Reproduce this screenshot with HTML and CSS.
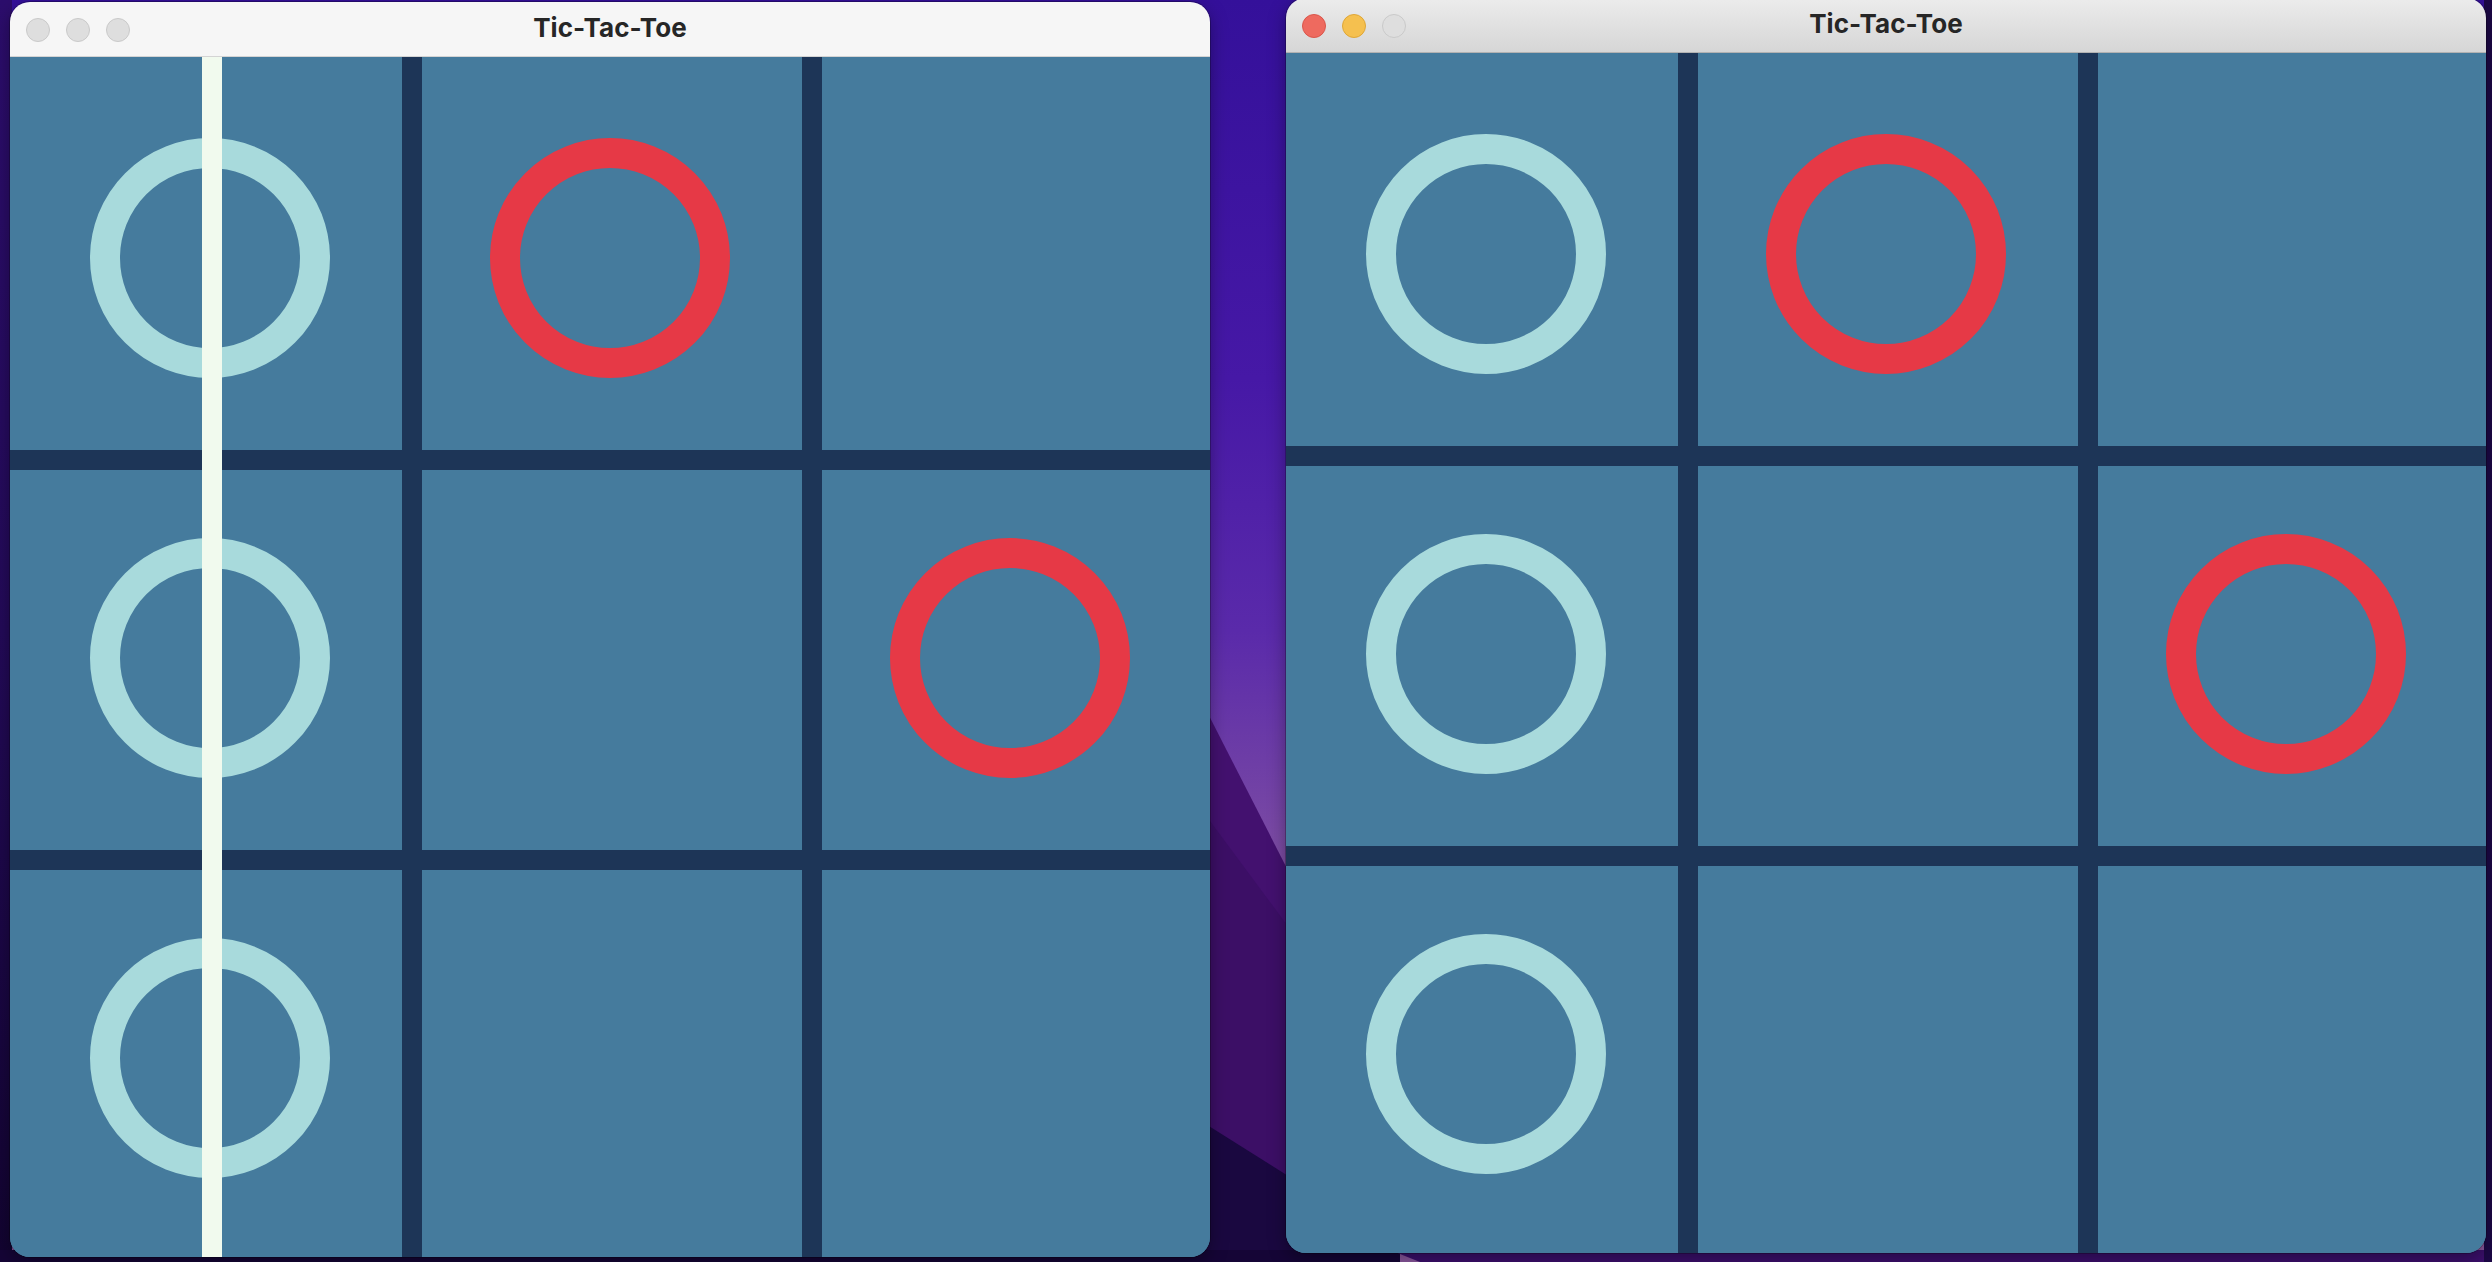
FILE: index.html
```
<!DOCTYPE html>
<html lang="en">
<head>
<meta charset="utf-8">
<title>Tic-Tac-Toe</title>
<link rel="stylesheet" href="styles.css">
</head>
<body>
<div class="desktop">
  <svg class="wallpaper" width="2492" height="1262" viewBox="0 0 2492 1262" aria-hidden="true">
    <defs>
      <linearGradient id="sky" x1="0" y1="0" x2="0" y2="1">
        <stop offset="0" stop-color="#34109a"/>
        <stop offset="0.3" stop-color="#4618a6"/>
        <stop offset="0.5" stop-color="#5a2aaa"/>
        <stop offset="0.68" stop-color="#7c4ca3"/>
        <stop offset="0.8" stop-color="#8a589e"/>
      </linearGradient>
      <linearGradient id="edge" x1="0" y1="0" x2="0" y2="1">
        <stop offset="0" stop-color="#2c0d6c"/>
        <stop offset="0.5" stop-color="#230a58"/>
        <stop offset="1" stop-color="#120430"/>
      </linearGradient>
    </defs>
    <rect width="2492" height="1262" fill="url(#sky)"/>
    <polygon points="1150,600 1350,992 1350,1262 1150,1262" fill="#43116f"/>
    <polygon points="1150,740 1350,1010 1350,1262 1150,1262" fill="#3c0f66"/>
    <polygon points="1150,1089 1350,1215 1350,1262 1150,1262" fill="#1a0840"/>
    <rect x="0" y="0" width="12" height="1262" fill="url(#edge)"/>
    <rect x="0" y="1250" width="1400" height="12" fill="#150536"/>
    <polygon points="1390,1250 2492,1250 2492,1262 1420,1262" fill="#3b0f6c"/>
    <rect x="2484" y="0" width="8" height="1262" fill="#1c0846"/>
  </svg>

  <section class="window window-left">
    <header class="titlebar titlebar-inactive">
      <div class="lights">
        <span class="light light-off"></span>
        <span class="light light-off"></span>
        <span class="light light-off"></span>
      </div>
      <h1 class="title">Tic-Tac-Toe</h1>
    </header>
    <div class="content">
      <svg class="board" width="1200" height="1200" viewBox="0 0 1200 1200">
        <rect width="1200" height="1200" fill="#457b9d"/>
        <rect x="392" y="0" width="20" height="1200" fill="#1d3557"/>
        <rect x="792" y="0" width="20" height="1200" fill="#1d3557"/>
        <rect x="0" y="393" width="1200" height="20" fill="#1d3557"/>
        <rect x="0" y="793" width="1200" height="20" fill="#1d3557"/>
        <circle cx="200" cy="201" r="105" fill="none" stroke="#a8dadc" stroke-width="30"/>
        <circle cx="200" cy="601" r="105" fill="none" stroke="#a8dadc" stroke-width="30"/>
        <circle cx="200" cy="1001" r="105" fill="none" stroke="#a8dadc" stroke-width="30"/>
        <circle cx="600" cy="201" r="105" fill="none" stroke="#e63946" stroke-width="30"/>
        <circle cx="1000" cy="601" r="105" fill="none" stroke="#e63946" stroke-width="30"/>
        <rect x="192" y="0" width="20" height="1200" fill="#f1faee"/>
      </svg>
    </div>
  </section>

  <section class="window window-right">
    <header class="titlebar titlebar-active">
      <div class="lights">
        <span class="light light-red"></span>
        <span class="light light-yellow"></span>
        <span class="light light-off"></span>
      </div>
      <h1 class="title">Tic-Tac-Toe</h1>
    </header>
    <div class="content">
      <svg class="board" width="1200" height="1200" viewBox="0 0 1200 1200">
        <rect width="1200" height="1200" fill="#457b9d"/>
        <rect x="392" y="0" width="20" height="1200" fill="#1d3557"/>
        <rect x="792" y="0" width="20" height="1200" fill="#1d3557"/>
        <rect x="0" y="393" width="1200" height="20" fill="#1d3557"/>
        <rect x="0" y="793" width="1200" height="20" fill="#1d3557"/>
        <circle cx="200" cy="201" r="105" fill="none" stroke="#a8dadc" stroke-width="30"/>
        <circle cx="200" cy="601" r="105" fill="none" stroke="#a8dadc" stroke-width="30"/>
        <circle cx="200" cy="1001" r="105" fill="none" stroke="#a8dadc" stroke-width="30"/>
        <circle cx="600" cy="201" r="105" fill="none" stroke="#e63946" stroke-width="30"/>
        <circle cx="1000" cy="601" r="105" fill="none" stroke="#e63946" stroke-width="30"/>
      </svg>
    </div>
  </section>
</div>
</body>
</html>
```

FILE: styles.css
```
* {
  box-sizing: border-box;
}

html, body {
  margin: 0;
  padding: 0;
  width: 2492px;
  height: 1262px;
  overflow: hidden;
  background: #2a0c6a;
  font-family: Inter, "Liberation Sans", sans-serif;
}

.desktop {
  position: relative;
  width: 2492px;
  height: 1262px;
  overflow: hidden;
}

.wallpaper {
  position: absolute;
  left: 0;
  top: 0;
  display: block;
}

.window {
  position: absolute;
  width: 1200px;
  height: 1255px;
  display: flex;
  flex-direction: column;
  border-radius: 20px;
  overflow: hidden;
  box-shadow: 0 0 0 1px rgba(0, 0, 0, 0.25), 0 6px 18px rgba(0, 0, 0, 0.35);
}

.window-left {
  left: 10px;
  top: 2px;
}

.window-right {
  left: 1286px;
  top: -2px;
}

.titlebar {
  position: relative;
  flex: 0 0 55px;
  height: 55px;
  display: flex;
  align-items: center;
  justify-content: center;
}

.titlebar-inactive {
  background: #f6f6f6;
  border-bottom: 1px solid #d4d4d4;
}

.titlebar-active {
  background: linear-gradient(to bottom, #ececec, #d6d6d6);
  border-bottom: 1px solid #b2b2b2;
}

.lights {
  position: absolute;
  left: 16px;
  top: 16px;
  display: flex;
  gap: 16px;
}

.light {
  width: 24px;
  height: 24px;
  border-radius: 50%;
  display: block;
}

.light-off {
  background: #dedede;
  border: 1px solid #c9c9c9;
}

.light-red {
  background: #ee6a5f;
  border: 1px solid #d9564b;
}

.light-yellow {
  background: #f5c04f;
  border: 1px solid #dea637;
}

.title {
  margin: 0 0 2px 0;
  font-size: 26px;
  font-weight: 700;
  color: #262626;
  line-height: 30px;
  letter-spacing: 0.1px;
}

.content {
  flex: 0 0 1200px;
  height: 1200px;
  background: #457b9d;
}

.board {
  display: block;
}
```
